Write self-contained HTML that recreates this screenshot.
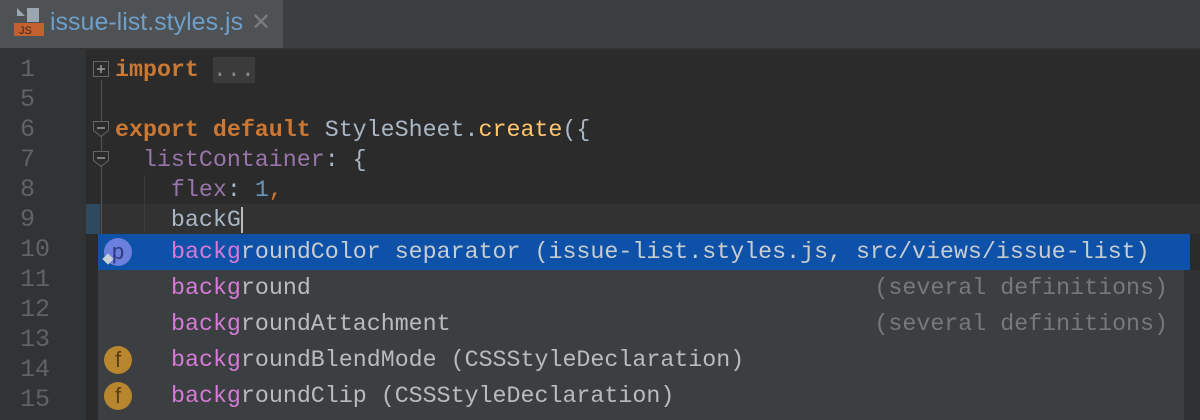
<!DOCTYPE html>
<html><head><meta charset="utf-8"><style>
*{margin:0;padding:0;box-sizing:border-box}
body{width:1200px;height:420px;overflow:hidden;background:#2b2b2b;position:relative;font-family:"Liberation Mono",monospace;font-size:23.3px}
.tabbar{position:absolute;left:0;top:0;width:1200px;height:50px;background:#3c3f41;border-bottom:2px solid #323232}
.tab{position:absolute;left:0;top:0;width:283px;height:48px;background:#4e5254}
.tab .name{position:absolute;left:50px;top:8px;font-family:"Liberation Sans",sans-serif;font-size:25px;color:#6f9ec9}
.tab .x{position:absolute;left:251px;top:8px;font-family:"Liberation Sans",sans-serif;font-size:24px;color:#7a7d80}
.gutter{position:absolute;left:0;top:50px;width:86px;height:370px;background:#313335}
.ln{position:absolute;left:20px;color:#606366;line-height:30px;font-size:25px}
.line{position:absolute;left:115px;white-space:pre;line-height:30px;color:#a9b7c6}
.kw{color:#cc7832;font-weight:bold}
.pr{color:#9876aa}
.nu{color:#6897bb}
.fn{color:#ffc66d}
.popup{position:absolute;left:98px;top:234px;width:1086px;height:186px;background:#3c3f41}
.sb{position:absolute;left:1184px;top:270px;width:16px;height:150px;background:#2f3133}
.row{position:absolute;left:0;width:1092px;height:36px;line-height:36px;white-space:pre;color:#bbbbbb}
.row .t{position:absolute;left:73px}
.row .g{position:absolute;right:22px;color:#787878}
.m{color:#d77ad6}
.sel{background:#0d52a8;color:#c9ccd0}
.ic{position:absolute;left:6px;top:4px;width:28px;height:28px;border-radius:50%;text-align:center;line-height:27px;font-size:22px;font-family:"Liberation Sans",sans-serif}
</style></head><body>
<div class="tabbar"><div class="tab">
<svg style="position:absolute;left:13px;top:6px" width="32" height="32" viewBox="0 0 32 32"><path d="M4 2h8v8H4z M14 2h12v14h-12z" fill="#9aa7b0"/><path d="M4 2l8 0 0 8z" fill="#4e5254"/><rect x="1" y="17" width="30" height="13" fill="#c2612f"/><text x="6" y="28" font-family="Liberation Sans" font-size="11" fill="#3a2a20">JS</text></svg>
<div class="name">issue-list.styles.js</div><div class="x">✕</div></div></div>
<div class="gutter"></div>
<div style="position:absolute;left:86px;top:204px;width:14px;height:30px;background:#2f4a5e"></div>
<div style="position:absolute;left:100px;top:204px;width:1100px;height:30px;background:#323232"></div>
<div style="position:absolute;left:101px;top:80px;width:1px;height:340px;background:#555"></div>
<div style="position:absolute;left:144px;top:175px;width:1px;height:60px;background:#3b3b3b"></div>
<div class="ln" style="top:55px">1</div><div class="ln" style="top:85px">5</div><div class="ln" style="top:115px">6</div><div class="ln" style="top:145px">7</div><div class="ln" style="top:175px">8</div><div class="ln" style="top:205px">9</div><div class="ln" style="top:235px">10</div><div class="ln" style="top:265px">11</div><div class="ln" style="top:295px">12</div><div class="ln" style="top:325px">13</div><div class="ln" style="top:355px">14</div><div class="ln" style="top:385px">15</div>
<svg style="position:absolute;left:92px;top:60px" width="18" height="110" viewBox="0 0 18 110"><rect x="1.5" y="1.5" width="15" height="15" fill="#2b2b2b" stroke="#666"/><path d="M5 9h8M9 5v8" stroke="#999" stroke-width="1.5"/><path d="M1.5 61.5h15v9l-7.5 6-7.5-6z M1.5 91.5h15v9l-7.5 6-7.5-6z" fill="#2b2b2b" stroke="#666"/><path d="M5 68h8M5 98h8" stroke="#999" stroke-width="1.5"/></svg>
<div class="line" style="top:55px"><span class="kw">import</span> <span style="background:#3b3b3b;color:#888">...</span></div>
<div class="line" style="top:115px"><span class="kw">export default</span> StyleSheet.<span class="fn">create</span>({</div>
<div class="line" style="top:145px">  <span class="pr">listContainer</span>: {</div>
<div class="line" style="top:175px">    <span class="pr">flex</span>: <span class="nu">1</span><span class="kw" style="font-weight:normal">,</span></div>
<div class="line" style="top:205px">    backG<span style="display:inline-block;width:2px;height:26px;background:#bbb;vertical-align:middle"></span></div>
<div class="sb"></div>
<div class="popup">
<div class="row sel" style="top:0"><div class="ic" style="background:#6b7fdc;color:#2d3a80">p</div><span style="position:absolute;left:6px;top:21px;width:8px;height:8px;background:#c8d0d8;transform:rotate(45deg)"></span><span class="t"><span class="m">backg</span>roundColor separator (issue-list.styles.js, src/views/issue-list)</span></div>
<div class="row" style="top:36px"><span class="t"><span class="m">backg</span>round</span><span class="g">(several definitions)</span></div>
<div class="row" style="top:72px"><span class="t"><span class="m">backg</span>roundAttachment</span><span class="g">(several definitions)</span></div>
<div class="row" style="top:108px"><div class="ic" style="background:#b8862f;color:#5a3e12">f</div><span class="t"><span class="m">backg</span>roundBlendMode (CSSStyleDeclaration)</span></div>
<div class="row" style="top:144px"><div class="ic" style="background:#b8862f;color:#5a3e12">f</div><span class="t"><span class="m">backg</span>roundClip (CSSStyleDeclaration)</span></div>
</div>
</body></html>
